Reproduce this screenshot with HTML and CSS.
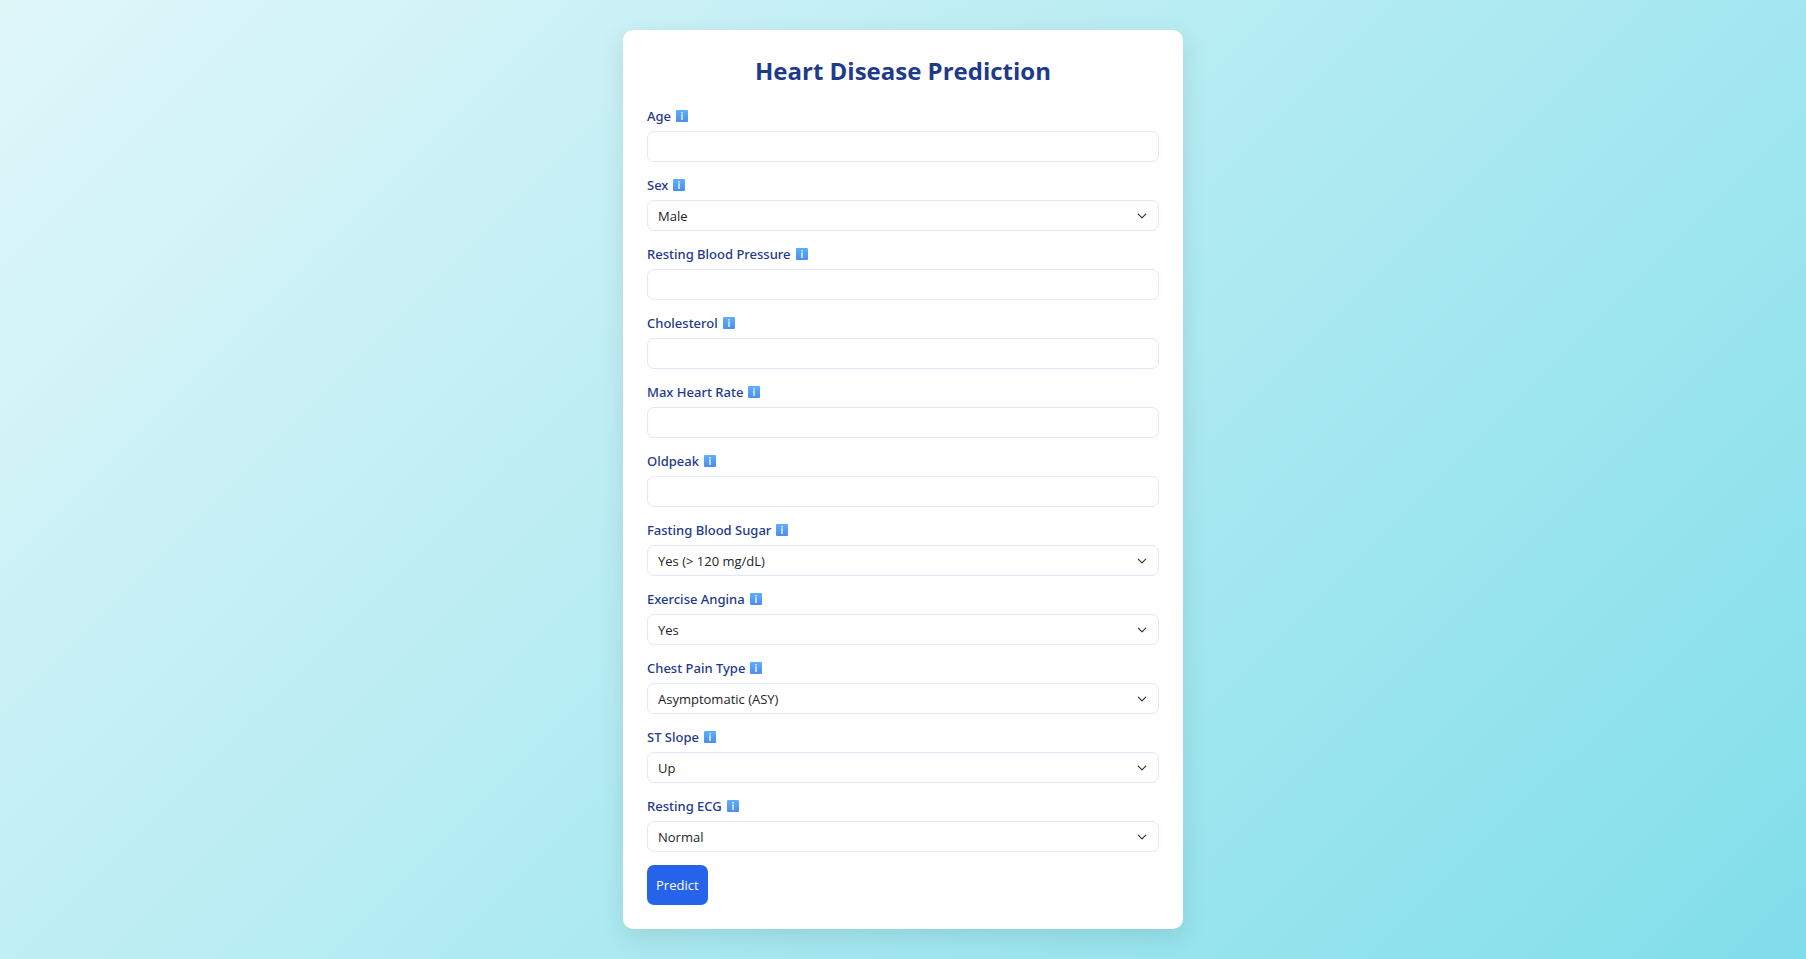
FILE: index.html
```html
<!DOCTYPE html>
<html lang="en">
<head>
<meta charset="utf-8">
<meta name="viewport" content="width=device-width, initial-scale=1">
<title>Heart Disease Prediction</title>
<link rel="stylesheet" href="styles.css">
</head>
<body>
<svg class="sprite" aria-hidden="true">
  <defs>
    <linearGradient id="info-fill" x1="0" y1="0" x2="0" y2="1">
      <stop offset="0" stop-color="#5eb0fb"/>
      <stop offset="1" stop-color="#4d8dec"/>
    </linearGradient>
    <symbol id="info" viewBox="0 0 12 12">
      <rect width="12" height="12" rx="1" fill="url(#info-fill)"/>
      <path d="M5.200 2h1.600v1.500H5.200zM5.200 4.300h1.600V10H5.200z" fill="#dcebfd"/>
    </symbol>
  </defs>
</svg>
<main class="card">
  <h1 class="title">Heart Disease Prediction</h1>
  <form class="form">
    <div class="field">
      <label class="label" for="age">Age <svg class="info"><use href="#info"/></svg></label>
      <input class="control" id="age" type="text">
    </div>
    <div class="field">
      <label class="label" for="sex">Sex <svg class="info"><use href="#info"/></svg></label>
      <select class="control select" id="sex"><option>Male</option><option>Female</option></select>
    </div>
    <div class="field">
      <label class="label" for="bp">Resting Blood Pressure <svg class="info"><use href="#info"/></svg></label>
      <input class="control" id="bp" type="text">
    </div>
    <div class="field">
      <label class="label" for="chol">Cholesterol <svg class="info"><use href="#info"/></svg></label>
      <input class="control" id="chol" type="text">
    </div>
    <div class="field">
      <label class="label" for="hr">Max Heart Rate <svg class="info"><use href="#info"/></svg></label>
      <input class="control" id="hr" type="text">
    </div>
    <div class="field">
      <label class="label" for="oldpeak">Oldpeak <svg class="info"><use href="#info"/></svg></label>
      <input class="control" id="oldpeak" type="text">
    </div>
    <div class="field">
      <label class="label" for="sugar">Fasting Blood Sugar <svg class="info"><use href="#info"/></svg></label>
      <select class="control select" id="sugar"><option>Yes (&gt; 120 mg/dL)</option><option>No</option></select>
    </div>
    <div class="field">
      <label class="label" for="angina">Exercise Angina <svg class="info"><use href="#info"/></svg></label>
      <select class="control select" id="angina"><option>Yes</option><option>No</option></select>
    </div>
    <div class="field">
      <label class="label" for="pain">Chest Pain Type <svg class="info"><use href="#info"/></svg></label>
      <select class="control select" id="pain"><option>Asymptomatic (ASY)</option></select>
    </div>
    <div class="field">
      <label class="label" for="slope">ST Slope <svg class="info"><use href="#info"/></svg></label>
      <select class="control select" id="slope"><option>Up</option><option>Flat</option><option>Down</option></select>
    </div>
    <div class="field">
      <label class="label" for="ecg">Resting ECG <svg class="info"><use href="#info"/></svg></label>
      <select class="control select" id="ecg"><option>Normal</option></select>
    </div>
    <button class="submit" type="submit">Predict</button>
  </form>
</main>
</body>
</html>
```
FILE: styles.css
```css
*, *::before, *::after { box-sizing: border-box; }

body {
  margin: 0;
  min-height: 100vh;
  display: flex;
  align-items: center;
  justify-content: center;
  padding: 24px;
  background: linear-gradient(135deg, #e0f7fa, #b2ebf2 50%, #80deea);
  color: #212529;
  font: 13px/20px "Open Sans", "Noto Sans", sans-serif;
}

.sprite { position: absolute; width: 0; height: 0; }

.card {
  width: 100%;
  max-width: 560px;
  padding: 24px;
  border-radius: 10px;
  background: #fff;
  box-shadow: 0 7px 26px rgba(0, 0, 0, 0.1);
}

.title {
  margin: 0 0 18px;
  color: #1e3a8a;
  font-size: 24px;
  line-height: 34px;
  font-weight: 700;
  text-align: center;
}

.form {
  display: flex;
  flex-direction: column;
  gap: 13px;
}

.field {
  display: flex;
  flex-direction: column;
  gap: 5px;
}

.label {
  display: flex;
  align-items: center;
  gap: 5px;
  color: #1e3a8a;
  font-weight: 600;
  font-family: "Noto Sans", "Open Sans", sans-serif;
  font-weight: 500;
}

.info { width: 12px; height: 12px; }

.control {
  width: 100%;
  height: 31px;
  padding: 0 10px;
  border: 1px solid #e0e7ff;
  border-radius: 7px;
  background-color: #fff;
  color: inherit;
  font: inherit;
}

.select {
  appearance: none;
  background-image: url("data:image/svg+xml,%3Csvg xmlns='http://www.w3.org/2000/svg' viewBox='0 0 16 16'%3E%3Cpath fill='none' stroke='%23343a40' stroke-linecap='round' stroke-linejoin='round' stroke-width='2' d='m2 5 6 6 6-6'/%3E%3C/svg%3E");
  background-repeat: no-repeat;
  background-position: right 11px center;
  background-size: 10px 10px;
}

.control:focus { outline: 2px solid #2563eb; }

.submit {
  align-self: flex-start;
  height: 40px;
  padding: 0 9px;
  border: 0;
  border-radius: 7px;
  background: #2563eb;
  color: #fff;
  font: inherit;
  font-weight: 500;
  cursor: pointer;
}
```
